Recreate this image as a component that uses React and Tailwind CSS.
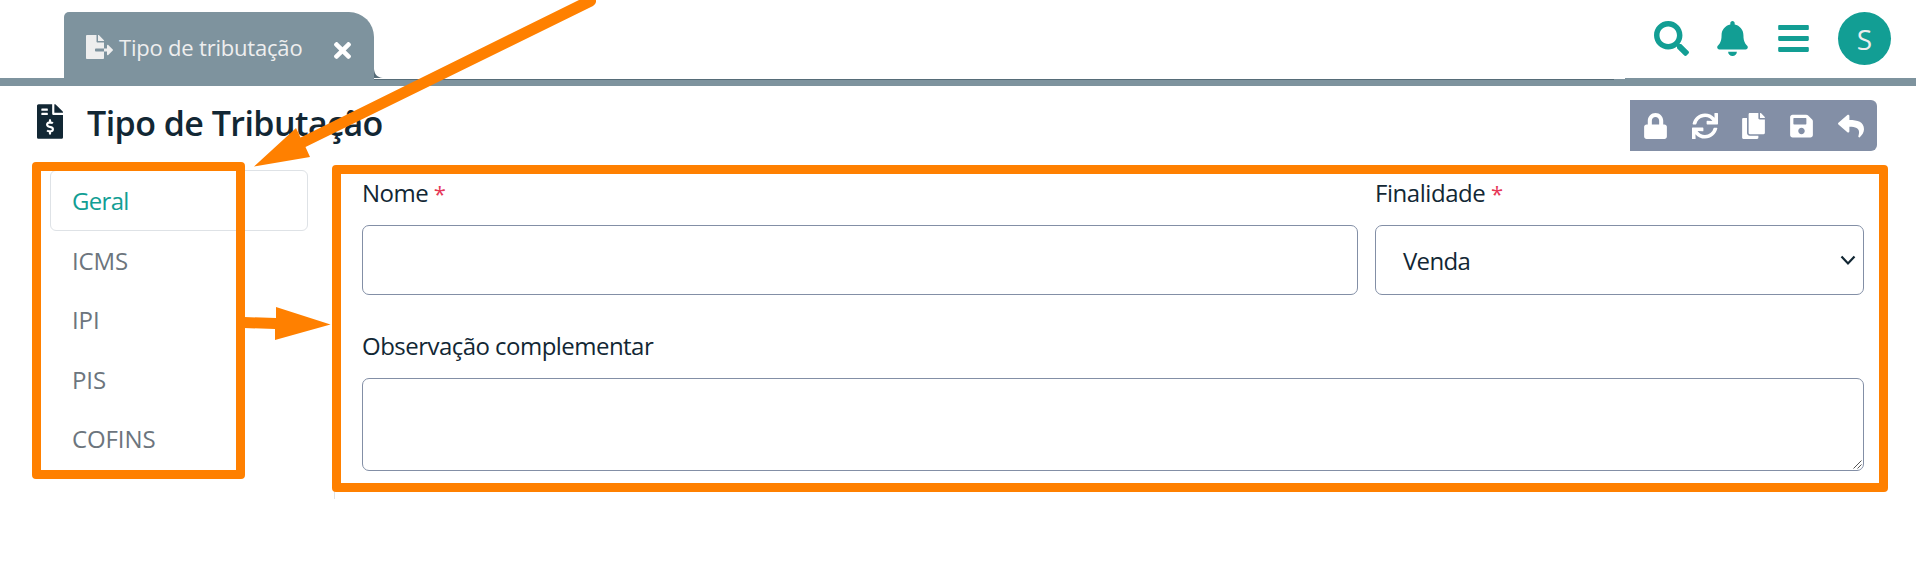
import {
  FaBars,
  FaBell,
  FaCopy,
  FaFileExport,
  FaFileInvoiceDollar,
  FaLock,
  FaReply,
  FaSave,
  FaSearch,
  FaSync,
  FaTimes,
} from "react-icons/fa";

function Header() {
  return (
    <header>
      <div className="flex h-[78px] items-end justify-between">
        <div className="flex items-end pl-16">
          <div className="flex h-[66px] w-[310px] items-center rounded-tl-[5px] rounded-tr-[25px] bg-[#7e939e] pl-[22px] text-[#eeeeee]">
            <FaFileExport className="mt-[4px] h-6 w-[27px]" />
            <span className="ml-[6px] mt-[3px] w-[184px] whitespace-nowrap text-[22px] leading-[30px] tracking-[-0.2px]">
              Tipo de tributação
            </span>
            <FaTimes className="ml-[31px] mt-[10px] h-[25px] w-[17px] text-white" />
          </div>
          <svg className="h-[9px] w-[9px]" viewBox="0 0 9 9">
            <path d="M0 0C0.5 5 3 8.5 9 9H0Z" fill="#566c78" />
          </svg>
        </div>
        <nav className="flex h-[78px] items-start pr-[25px] pt-3 text-[#129e94]">
          <FaSearch className="mt-[9px] h-[35px] w-[35px]" />
          <FaBell className="ml-7 mt-[9px] h-[35px] w-[31px]" />
          <FaBars className="ml-[30px] mt-[9px] h-[35px] w-[31px]" />
          <div className="ml-[29px] flex h-[53px] w-[53px] items-center justify-center rounded-full bg-[#129e94] text-[28px] text-[#eeeeee]">
            S
          </div>
        </nav>
      </div>
      <div className="flex h-2">
        <div className="w-[374px] bg-[#7e939e]" />
        <div className="w-[1240px] border-t border-white bg-[#7e939e]">
          <div className="h-px bg-[#566c78]" />
        </div>
        <div className="w-[11px] border-t border-white bg-[#7e939e]" />
        <div className="flex-1 bg-[#7e939e]" />
      </div>
    </header>
  );
}

function TitleBar() {
  return (
    <div className="flex h-[76px] items-start justify-between pl-[37px] pr-[39px] pt-[14px]">
      <div className="flex items-start text-[#122734]">
        <FaFileInvoiceDollar className="mt-1 h-[35px] w-[26px]" />
        <h1 className="ml-6 whitespace-nowrap text-[34px] font-semibold leading-[46px] tracking-[-0.55px]">
          Tipo de Tributação
        </h1>
      </div>
      <div className="flex h-[51px] w-[247px] items-center rounded-r-[6px] bg-[#838fa6] pl-[14px] text-white">
        <FaLock className="h-[26px] w-[23px]" />
        <FaSync className="ml-[25px] h-[26px] w-[26px]" />
        <FaCopy className="ml-6 h-[26px] w-[23px]" />
        <FaSave className="ml-[25px] h-[26px] w-[23px]" />
        <FaReply className="ml-[25px] h-[26px] w-[26px]" />
      </div>
    </div>
  );
}

const itemBase = "flex h-[59.5px] items-center pl-[22px] text-2xl leading-9 tracking-[-0.1px] ";

function Sidebar() {
  return (
    <nav className="mt-2 w-[258px] text-[#6c757d]">
      <div className="flex h-[61px] items-center rounded-[6px] border border-[#dee2e6] pl-[21px] text-2xl text-[#129e94]">
        <span className="tracking-[-0.7px]">Geral</span>
      </div>
      <div className={itemBase}>
        <span>ICMS</span>
      </div>
      <div className={itemBase}>
        <span>IPI</span>
      </div>
      <div className={itemBase}>
        <span>PIS</span>
      </div>
      <div className={itemBase}>
        <span>COFINS</span>
      </div>
    </nav>
  );
}

const field = "rounded-[7px] border border-[#838fa6] bg-white ";

function Required() {
  return <span className="text-[22px] text-[#e63757]">*</span>;
}

function Form() {
  return (
    <main className="ml-[26px] mt-2 h-[329px] w-[1532px] border-l border-[#dee2e6] pl-[27px] pt-[5px] text-2xl tracking-[-0.53px] text-[#122734]">
      <div className="flex gap-[17px]">
        <div className="w-[996px]">
          <label className="block h-[50px] leading-[36px]">
            Nome <Required />
          </label>
          <div className={field + "h-[70px]"} />
        </div>
        <div className="w-[489px]">
          <label className="block h-[50px] leading-[36px] tracking-[-0.45px]">
            Finalidade <Required />
          </label>
          <div className={field + "flex h-[70px] items-center justify-between pl-[27px] pr-[7px]"}>
            <span className="pt-[2px] tracking-[-0.7px]">Venda</span>
            <svg className="h-4 w-4" viewBox="0 0 16 16" fill="none">
              <path d="M1.5 4.5L8 11.5L14.5 4.5" stroke="#122734" strokeWidth="2.2" />
            </svg>
          </div>
        </div>
      </div>
      <label className="mt-[33px] block h-[50px] leading-[36px]">Observação complementar</label>
      <div className={field + "flex h-[93px] w-[1502px] items-end justify-end"}>
        <svg className="h-[10px] w-[10px]" viewBox="0 0 10 10" stroke="#555" strokeWidth="1">
          <path d="M0.5 8.5L8.5 0.5M4.5 8.5L8.5 4.5" />
        </svg>
      </div>
    </main>
  );
}

function Annotations() {
  return (
    <>
      <div className="absolute left-8 top-[162px] h-[317px] w-[213px] rounded-[4px] border-[9px] border-[#ff8000]" />
      <div className="absolute left-[332px] top-[165px] h-[327px] w-[1556px] rounded-[4px] border-[9px] border-[#ff8000]" />
      <svg className="absolute left-0 top-0 h-[360px] w-[620px]" viewBox="0 0 620 360" fill="#ff8000">
        <path d="M254 166.5L296 128L300.5 137.5L579 0H596V2Q595.5 4.5 593 6L305.5 147L310 157Z" />
        <path d="M244 317L276 318V307L330.5 324.5L275 340V329L244 328Z" />
      </svg>
    </>
  );
}

export default function App() {
  return (
    <div className="relative h-[571px] w-[1916px] overflow-hidden bg-white font-['Open_Sans','Noto_Sans',sans-serif]">
      <Header />
      <TitleBar />
      <div className="flex pl-[50px]">
        <Sidebar />
        <Form />
      </div>
      <Annotations />
    </div>
  );
}
